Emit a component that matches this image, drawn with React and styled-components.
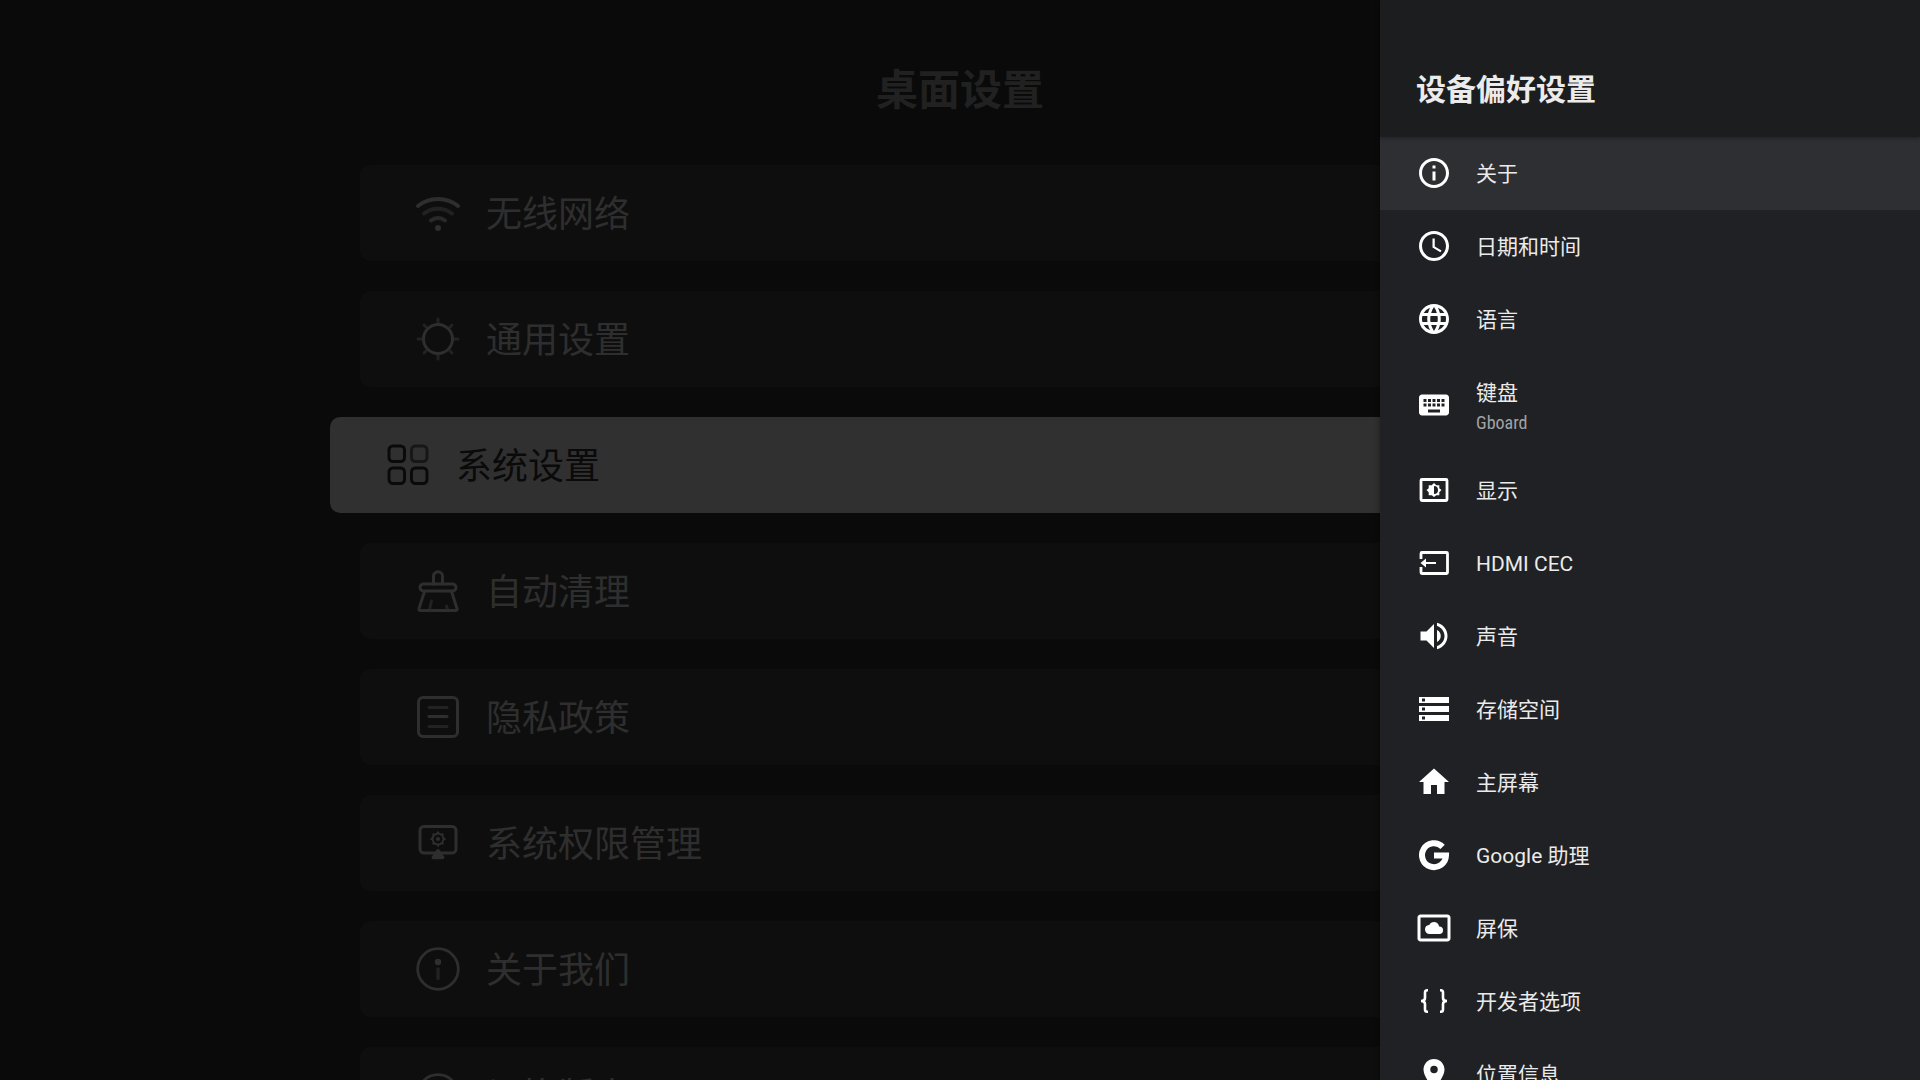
import React from "react";
import styled, { createGlobalStyle } from "styled-components";
import {
  MdInfoOutline,
  MdAccessTime,
  MdLanguage,
  MdKeyboard,
  MdVolumeUp,
  MdStorage,
  MdHome,
  MdSettingsSystemDaydream,
  MdPlace,
} from "react-icons/md";

const GlobalStyle = createGlobalStyle`
  * { box-sizing: border-box; }
  html, body { margin: 0; background: #0a0a0a; }
  body {
    overflow: hidden;
    font-family: Roboto, "Noto Sans CJK SC", sans-serif;
  }
  button { font: inherit; border: 0; margin: 0; text-align: left; cursor: pointer; }
  h1, h2, ul { margin: 0; padding: 0; }
  ul { list-style: none; }
`;

const Screen = styled.div`
  display: grid;
  grid-template-columns: minmax(0, 1fr);
  height: 100vh;
  overflow: hidden;
`;

const Desktop = styled.main`
  grid-area: 1 / 1;
  display: flex;
  flex-direction: column;
  align-items: center;
  overflow: hidden;
  background: #0a0a0a;
`;

const DesktopTitle = styled.h1`
  padding: 61px 0 44px;
  font-size: 42px;
  line-height: 60px;
  font-weight: 700;
  color: #212121;
`;

const CardList = styled.ul`
  display: flex;
  flex-direction: column;
  gap: 30px;
  width: 62.5%;
`;

const CardItem = styled.li`
  margin: 0 ${(p) => (p.$focused ? "-30px" : "0")};
`;

const Card = styled.button`
  display: flex;
  align-items: center;
  gap: 24px;
  width: 100%;
  height: 96px;
  padding: 0 54px;
  border-radius: 10px;
  font-size: 36px;
  line-height: 52px;
  font-weight: 400;
  background: ${(p) => (p.$focused ? "#303030" : "#0e0e0e")};
  color: ${(p) => (p.$focused ? "#0a0a0a" : "#2e2e2e")};
`;

const CardLabel = styled.span`
  padding-top: 3px;
`;

const CardIcon = styled.svg`
  flex: none;
  width: 48px;
  height: 48px;
  fill: none;
  stroke: currentColor;
  stroke-width: 3;
  stroke-linecap: round;
  stroke-linejoin: round;
`;

const Panel = styled.aside`
  grid-area: 1 / 1;
  justify-self: end;
  z-index: 1;
  width: 540px;
  overflow: hidden;
  background: #202124;
  color: #ebebeb;
  box-shadow: 0 0 6px rgba(0, 0, 0, 0.4);
`;

const PanelHeader = styled.header`
  position: relative;
  display: flex;
  align-items: flex-end;
  height: 137px;
  padding: 0 36px 25px;
  background: #1c1d1e;
  box-shadow: 0 1px 4px rgba(0, 0, 0, 0.35);
`;

const PanelTitle = styled.h2`
  font-size: 30px;
  line-height: 44px;
  font-weight: 700;
`;

const Row = styled.button`
  display: flex;
  align-items: center;
  gap: 24px;
  width: 100%;
  height: ${(p) => (p.$tall ? "98px" : "73px")};
  padding: 0 36px;
  color: inherit;
  background: ${(p) => (p.$focused ? "#2e2f33" : "transparent")};

  svg {
    flex: none;
    width: 36px;
    height: 36px;
    margin-bottom: 1px;
    color: #ffffff;
  }
`;

const RowText = styled.span`
  display: flex;
  flex-direction: column;
  padding-top: ${(p) => (p.$tall ? "6px" : "0")};
`;

const RowTitle = styled.span`
  font-size: 21px;
  line-height: 30px;
`;

const RowSummary = styled.span`
  font-family: "Roboto Condensed", Roboto, sans-serif;
  font-size: 18px;
  line-height: 30px;
  color: #a2a3a4;
`;

const icons = {
  wifi: (
    <CardIcon viewBox="0 0 48 48" aria-hidden="true">
      <path strokeWidth="4" d="M4 17C15 7.600 33 7.600 44 17" />
      <path strokeWidth="4" opacity="0.6" d="M10 24.500C18 18 30 18 38 24.500" />
      <path strokeWidth="4" opacity="0.85" d="M17 31.500C21 28 27 28 31 31.500" />
      <circle cx="24" cy="39" r="3" fill="currentColor" stroke="none" />
    </CardIcon>
  ),
  sun: (
    <CardIcon viewBox="0 0 48 48" aria-hidden="true">
      <circle cx="24" cy="24" r="14.500" />
      <path
        opacity="0.65"
        d="M24 4v4M24 40v4M4 24h4M40 24h4M10 10l2 2M36 36l2 2M38 10l-2 2M12 36l-2 2"
      />
    </CardIcon>
  ),
  grid: (
    <CardIcon viewBox="0 0 48 48" aria-hidden="true">
      <rect x="5" y="5" width="15.500" height="15.500" rx="4" />
      <rect x="27.500" y="5" width="15.500" height="15.500" rx="4" opacity="0.65" />
      <rect x="5" y="27" width="15.500" height="15.500" rx="4" />
      <rect x="27.500" y="27" width="15.500" height="15.500" rx="4" />
    </CardIcon>
  ),
  broom: (
    <CardIcon viewBox="0 0 48 48" aria-hidden="true">
      <path d="M19.500 17V9a4.500 4.200 0 0 1 9 0V17" />
      <rect x="6" y="17" width="36" height="7" rx="3.500" />
      <path d="M10.500 24.500L5 41.500q-.6 2 1.500 2h35q2.100 0 1.500-2L37.500 24.500" />
      <path opacity="0.65" d="M17.500 34L15.500 42.500M32.500 39l1 3.500" />
    </CardIcon>
  ),
  list: (
    <CardIcon viewBox="0 0 48 48" aria-hidden="true">
      <rect x="4.500" y="4.500" width="39" height="39" rx="4.500" />
      <path d="M15 23.500h18" />
      <path opacity="0.65" d="M15 14.500h18M15 33.500h18" />
    </CardIcon>
  ),
  monitor: (
    <CardIcon viewBox="0 0 48 48" aria-hidden="true">
      <rect x="6" y="7.500" width="36" height="26.500" rx="4" />
      <path
        fill="currentColor"
        stroke="none"
        d="M22.500 30.800q1.500-1.800 3 0l4.500 6.500q1.300 3-1.500 3h-9q-2.800 0-1.500-3z"
      />
      <circle cx="24" cy="20" r="5.500" strokeWidth="2" />
      <circle cx="24" cy="20" r="2" fill="currentColor" stroke="none" />
      <path
        strokeWidth="2"
        strokeLinecap="butt"
        d="M24 12.500v2M24 25.500v2M16.500 20h2M29.500 20h2M18.700 14.700l1.500 1.500M27.800 23.800l1.500 1.500M29.300 14.700l-1.500 1.500M20.200 23.800l-1.500 1.500"
      />
    </CardIcon>
  ),
  info: (
    <CardIcon viewBox="0 0 48 48" aria-hidden="true">
      <circle cx="24" cy="24" r="20.300" strokeWidth="2.800" />
      <circle cx="24" cy="17" r="3.200" fill="currentColor" stroke="none" />
      <path opacity="0.6" strokeWidth="3.500" d="M24 24v9.500" />
    </CardIcon>
  ),
};

const DisplayIcon = () => (
  <svg viewBox="0 0 36 36" fill="none" stroke="currentColor" aria-hidden="true">
    <rect x="5" y="7.500" width="26" height="21" rx="1" strokeWidth="2.800" />
    <path
      fill="currentColor"
      fillRule="evenodd"
      stroke="none"
      d="M18 11l2.300 2.200h3v3L25.500 18l-2.200 2.200v3h-3L18 25l-2.300-1.800h-3v-3L10.500 18l2.200-1.800v-3h3zM18 14v8a4 4 0 0 0 0-8z"
    />
  </svg>
);

const InputIcon = () => (
  <svg viewBox="0 0 36 36" fill="none" stroke="currentColor" aria-hidden="true">
    <path
      strokeWidth="2.800"
      d="M5 14V8.500q0-1 1-1h24.500q1 0 1 1v19q0 1-1 1H6q-1 0-1-1V22"
    />
    <path strokeWidth="2" d="M9 18h11" />
    <path fill="currentColor" stroke="none" d="M4.500 18l5.500-4.500v9z" />
  </svg>
);

const GoogleIcon = () => (
  <svg viewBox="0 0 36 36" fill="none" stroke="currentColor" aria-hidden="true">
    <path strokeWidth="6" d="M26.600 9.800A12 12 0 1 0 30 18.500H18" />
  </svg>
);

const BracesIcon = () => (
  <svg viewBox="0 0 36 36" fill="none" stroke="currentColor" strokeWidth="2.600" aria-hidden="true">
    <path d="M12 7.300h-.8q-2.200 0-2.200 2.200v5.500q0 3-4 3q4 0 4 3v5.500q0 2.200 2.200 2.200h.8" />
    <path d="M24 7.300h.8q2.200 0 2.200 2.200v5.500q0 3 4 3q-4 0-4 3v5.500q0 2.200-2.200 2.200h-.8" />
  </svg>
);

const cards = [
  { label: "无线网络", icon: "wifi" },
  { label: "通用设置", icon: "sun" },
  { label: "系统设置", icon: "grid", focused: true },
  { label: "自动清理", icon: "broom" },
  { label: "隐私政策", icon: "list" },
  { label: "系统权限管理", icon: "monitor" },
  { label: "关于我们", icon: "info" },
  { label: "切换版本", icon: "info" },
];

const rows = [
  { label: "关于", Icon: MdInfoOutline, focused: true },
  { label: "日期和时间", Icon: MdAccessTime },
  { label: "语言", Icon: MdLanguage },
  { label: "键盘", Icon: MdKeyboard, summary: "Gboard" },
  { label: "显示", Icon: DisplayIcon },
  { label: "HDMI CEC", Icon: InputIcon },
  { label: "声音", Icon: MdVolumeUp },
  { label: "存储空间", Icon: MdStorage },
  { label: "主屏幕", Icon: MdHome },
  { label: "Google 助理", Icon: GoogleIcon },
  { label: "屏保", Icon: MdSettingsSystemDaydream },
  { label: "开发者选项", Icon: BracesIcon },
  { label: "位置信息", Icon: MdPlace },
];

export default function App() {
  return (
    <Screen lang="zh-CN">
      <GlobalStyle />
      <Desktop>
        <DesktopTitle>桌面设置</DesktopTitle>
        <CardList>
          {cards.map(({ label, icon, focused }) => (
            <CardItem key={label} $focused={focused}>
              <Card type="button" $focused={focused}>
                {icons[icon]}
                <CardLabel>{label}</CardLabel>
              </Card>
            </CardItem>
          ))}
        </CardList>
      </Desktop>
      <Panel>
        <PanelHeader>
          <PanelTitle>设备偏好设置</PanelTitle>
        </PanelHeader>
        <ul>
          {rows.map(({ label, Icon, summary, focused }) => (
            <li key={label}>
              <Row type="button" $focused={focused} $tall={Boolean(summary)}>
                <Icon />
                <RowText $tall={Boolean(summary)}>
                  <RowTitle>{label}</RowTitle>
                  {summary && <RowSummary>{summary}</RowSummary>}
                </RowText>
              </Row>
            </li>
          ))}
        </ul>
      </Panel>
    </Screen>
  );
}
